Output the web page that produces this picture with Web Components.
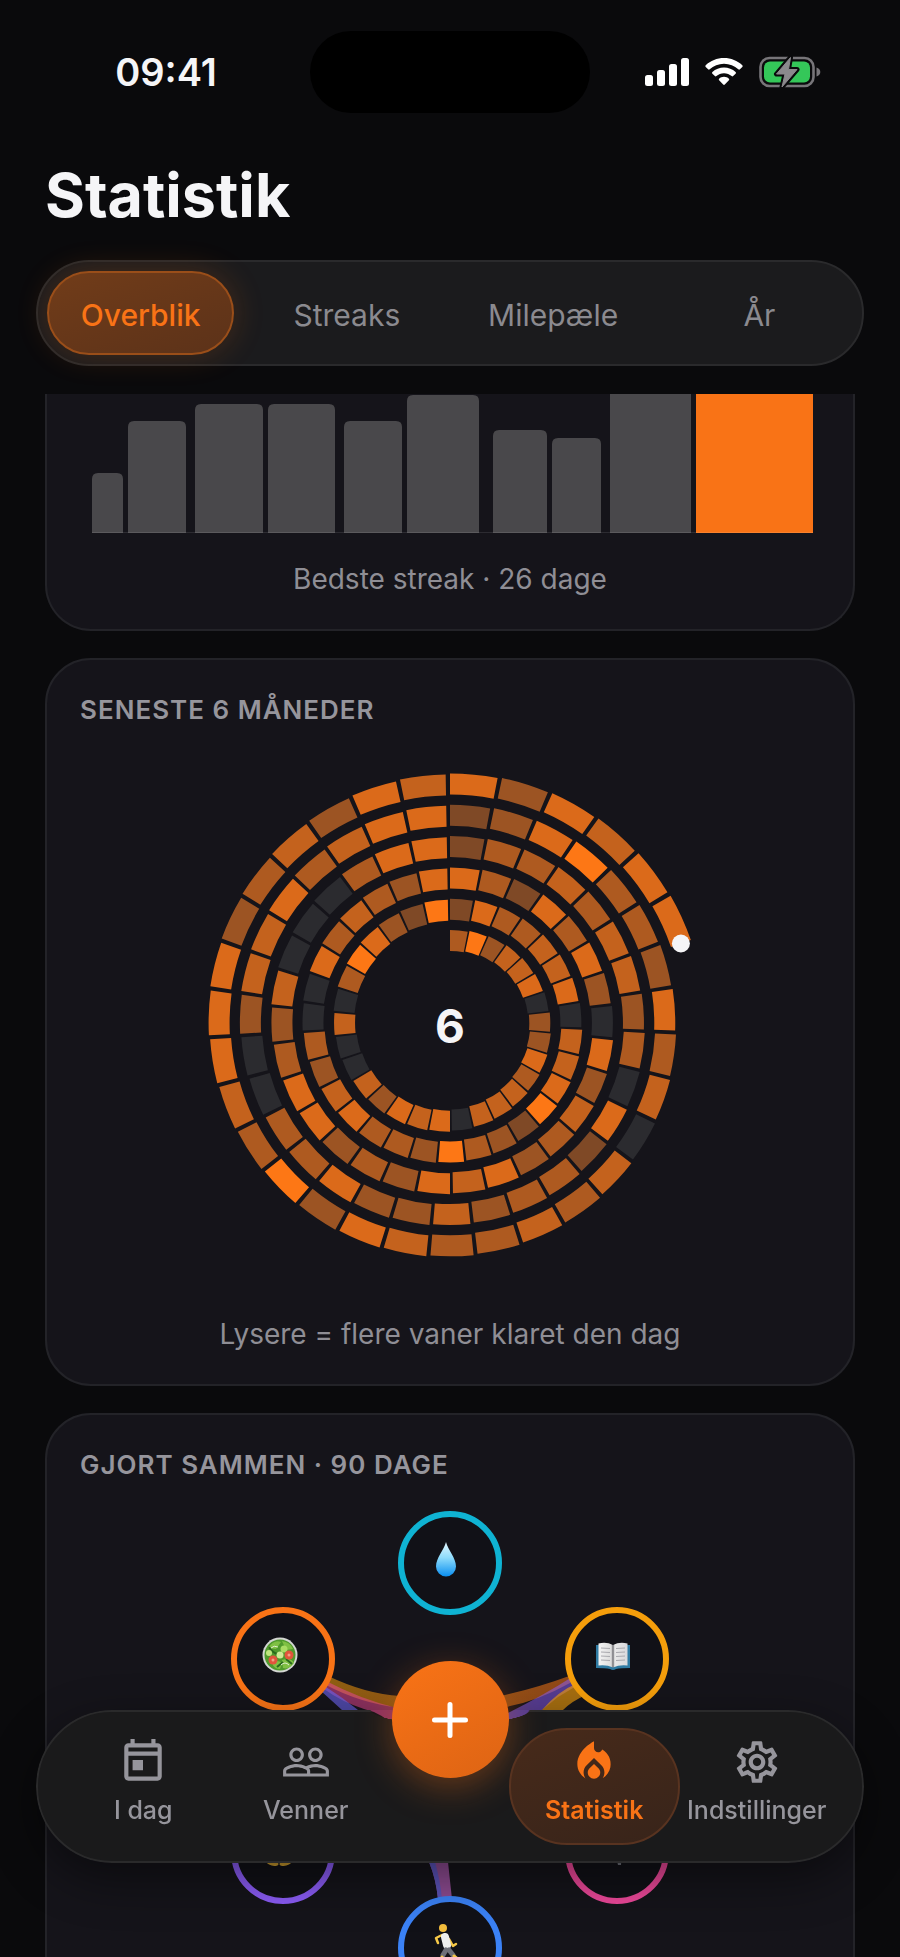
<!DOCTYPE html>
<html lang="da">
<head>
<meta charset="utf-8">
<meta name="viewport" content="width=device-width, initial-scale=1">
<title>Statistik</title>
<style>
    html, body {
        margin: 0;
        height: 100%;
        overflow: hidden;
    }

    body {
        --accent: #f97316;
        --muted: #96959c;
        background: #0a0a0c;
        color: #f5f5f7;
        font-family: Inter, "Noto Sans", sans-serif;
    }
</style>
</head>
<body>

<stats-page>
    <status-bar slot="status" time="09:41"></status-bar>
    <h1 slot="title">Statistik</h1>
    <segment-tabs slot="tabs">
        <segment-tab active>Overblik</segment-tab>
        <segment-tab>Streaks</segment-tab>
        <segment-tab>Milepæle</segment-tab>
        <segment-tab>År</segment-tab>
    </segment-tabs>

    <stat-card scrolled>
        <streak-bars></streak-bars>
        <span slot="caption">Bedste streak · 26 dage</span>
    </stat-card>
    <stat-card>
        <span slot="label">SENESTE 6 MÅNEDER</span>
        <day-spiral months="6"></day-spiral>
        <span slot="caption">Lysere = flere vaner klaret den dag</span>
    </stat-card>
    <stat-card>
        <span slot="label">GJORT SAMMEN · 90 DAGE</span>
        <habit-web></habit-web>
    </stat-card>

    <tab-bar slot="nav">
        <tab-item icon="today" href="#idag">I dag</tab-item>
        <tab-item icon="people" href="#venner">Venner</tab-item>
        <add-button slot="action"></add-button>
        <tab-item slot="end" icon="fire" href="#statistik" active>Statistik</tab-item>
        <tab-item slot="end" icon="settings" href="#indstillinger">Indstillinger</tab-item>
    </tab-bar>
</stats-page>

<script>
(function() {

    function define(name, html, setup) {
        const template = document.createElement('template')
        template.innerHTML = html

        window.customElements.define(name, class extends HTMLElement {
            constructor() {
                super()
                this.attachShadow({mode: 'open'})
                this.shadowRoot.appendChild(template.content.cloneNode(true))
            }

            connectedCallback() {
                if (setup) setup(this, this.shadowRoot)
            }
        })
    }

    define('stats-page', `
        <style>
            :host {
                display: flex;
                flex-direction: column;
                height: 100vh;
            }

            ::slotted(h1) {
                margin: 42px 45px 25px;
                font-size: 61px;
                font-weight: 700;
                line-height: 80px;
            }

            main {
                flex: 1;
                min-height: 0;
                overflow: hidden;
                display: flex;
                flex-direction: column;
                gap: 27px;
                margin-top: 28px;
                padding: 0 45px;
            }
        </style>
        <slot name="status"></slot>
        <slot name="title"></slot>
        <slot name="tabs"></slot>
        <main><slot></slot></main>
        <slot name="nav"></slot>
    `)

    define('status-bar', `
        <style>
            :host {
                display: grid;
                grid-template-columns: 1fr 280px 1fr;
                align-items: center;
                padding-top: 31px;
            }

            time {
                justify-self: center;
                margin-right: -22px;
                font-size: 38px;
                font-weight: 600;
                line-height: 48px;
            }

            .island {
                height: 82px;
                border-radius: 41px;
                background: #000;
            }

            .icons {
                display: flex;
                justify-content: center;
                align-items: center;
                gap: 16px;
                margin-right: 24px;
            }

            svg { display: block; }
        </style>
        <time></time>
        <div class="island"></div>
        <div class="icons">
            <svg width="44" height="30" viewBox="0 0 44 30" fill="#fff">
                <rect x="0" y="18" width="8" height="11" rx="2.5"/>
                <rect x="12" y="13" width="8" height="16" rx="2.5"/>
                <rect x="24" y="7" width="8" height="22" rx="2.5"/>
                <rect x="36" y="1" width="8" height="28" rx="2.5"/>
            </svg>
            <svg width="38" height="30" viewBox="0 0 38 30" fill="#fff">
                <path d="M19 1c7 0 13.500 2.700 18.300 7.200.5.5.5 1.200 0 1.700l-2.400 2.400c-.5.5-1.100.5-1.600 0C29.500 8.800 24.500 6.700 19 6.700S8.500 8.800 4.700 12.300c-.5.500-1.100.5-1.600 0L.7 9.900c-.5-.5-.5-1.200 0-1.700C5.500 3.700 12 1 19 1z"/>
                <path d="M19 10.500c4.400 0 8.500 1.700 11.600 4.500.5.500.5 1.200 0 1.700l-2.500 2.400c-.4.400-1 .4-1.500 0-2-1.800-4.700-2.900-7.600-2.900s-5.600 1.100-7.600 2.900c-.5.400-1.100.4-1.500 0l-2.500-2.400c-.5-.5-.5-1.200 0-1.700 3.100-2.800 7.200-4.500 11.600-4.500z"/>
                <path d="M19 19.800c1.900 0 3.600.7 4.900 1.900.5.500.5 1.100 0 1.600l-4.100 4.200c-.5.500-1.100.5-1.600 0l-4.100-4.200c-.5-.5-.5-1.100 0-1.600 1.300-1.200 3-1.900 4.900-1.900z"/>
            </svg>
            <svg width="62" height="32" viewBox="0 0 62 32">
                <rect x="1.500" y="2" width="53" height="28" rx="9" fill="none" stroke="#777579" stroke-width="2.600"/>
                <path d="M57.500 11.500c2.400.8 3.800 2.500 3.800 4.500s-1.400 3.700-3.800 4.500z" fill="#777579"/>
                <rect x="5" y="5.500" width="46" height="21" rx="6" fill="#34c759"/>
                <path d="M31.500 1.500L17.500 18h8.500l-3 13L38 13.500h-8.500z" fill="#8b898d" stroke="#0a0a0c" stroke-width="5" stroke-linejoin="round"/>
                <path d="M31.500 1.500L17.500 18h8.500l-3 13L38 13.500h-8.500z" fill="#8b898d" stroke="#8b898d" stroke-linejoin="round"/>
            </svg>
        </div>
    `, (el, root) => {
        root.querySelector('time').textContent = el.getAttribute('time')
    })

    define('segment-tabs', `
        <style>
            :host {
                display: grid;
                grid-auto-flow: column;
                grid-auto-columns: 1fr;
                gap: 19px;
                box-sizing: border-box;
                height: 106px;
                margin: 0 36px;
                padding: 9px;
                border: 2px solid #2a2a2c;
                border-radius: 53px;
                background: #1b1b1d;
            }
        </style>
        <slot></slot>
    `, el => el.setAttribute('role', 'tablist'))

    define('segment-tab', `
        <style>
            :host { display: grid; }

            button {
                padding: 4px 0 0;
                border: 2px solid transparent;
                border-radius: 42px;
                background: none;
                color: #8b8a8f;
                font: 400 30px/36px Inter, sans-serif;
            }

            :host([active]) button {
                border-color: #9a4e19;
                background: linear-gradient(160deg, #713c19, #5c3219);
                color: var(--accent);
                font-weight: 500;
                box-shadow: 0 0 32px rgba(249, 115, 22, .2);
            }
        </style>
        <button type="button" role="tab"><slot></slot></button>
    `, (el, root) => {
        root.querySelector('button').setAttribute('aria-selected', el.hasAttribute('active'))
    })

    define('stat-card', `
        <style>
            :host {
                display: flex;
                flex-direction: column;
                flex-shrink: 0;
                padding: 33px 33px 32px;
                border: 2px solid #232328;
                border-radius: 46px;
                background: #15141a;
            }

            /* top of the card has scrolled under the header */
            :host([scrolled]) {
                padding-top: 0;
                border-top: 0;
                border-radius: 0 0 46px 46px;
            }

            ::slotted([slot="label"]) {
                color: var(--muted);
                font-size: 26px;
                font-weight: 600;
                line-height: 34px;
                letter-spacing: 1px;
            }

            ::slotted([slot="caption"]) {
                color: #8f8e95;
                font-size: 28px;
                line-height: 36px;
                text-align: center;
            }
        </style>
        <slot name="label"></slot>
        <slot></slot>
        <slot name="caption"></slot>
    `)

    define('streak-bars', `
        <style>
            :host {
                display: block;
                margin-bottom: 28px;
            }

            svg {
                display: block;
                width: 100%;
            }
        </style>
        <svg viewBox="0 0 740 139" role="img" aria-label="Streaks"></svg>
    `, (el, root) => {
        // x, width, height of each streak; the last one is the record
        const bars = [
            [12, 31, 60], [48, 58, 112], [115, 68, 129], [188, 67, 129], [264, 58, 112],
            [327, 72, 138], [413, 54, 103], [472, 49, 95], [530, 81, 155], [616, 117, 224]
        ]
        root.querySelector('svg').innerHTML = bars.map(([x, w, h], i) =>
            `<path d="M${x} 139V${139 - h + 6}q0 -6 6 -6h${w - 12}q6 0 6 6V139z" fill="${i === bars.length - 1 ? '#f97316' : '#49484b'}"/>`
        ).join('') + '<path d="M12 138.500H733" stroke="#fff" stroke-opacity=".1"/>'
    })

    define('day-spiral', `
        <style>
            :host {
                display: block;
                margin: 23px 0 20px;
            }

            svg {
                display: block;
                width: 100%;
            }

            text {
                fill: #f5f5f7;
                font: 700 46px Inter, sans-serif;
                text-anchor: middle;
            }
        </style>
        <svg viewBox="-370 -273 740 546" role="img"><g></g><text x="0" y="20"></text></svg>
    `, (el, root) => {
        const shades = ['#2b2b2f', '#7f4926', '#9c5423', '#ae5a20', '#c4621d', '#db6a1a', '#fd7715']
        // one string per month, one digit per day
        const months = [
            '362445022534440545240040365216',
            '1533445044561236233542300534325',
            '531535205243254523255324000355',
            '1334344230513324225330024453455',
            '1256332534043433452634555234254',
            '525455'
        ]
        const lengths = [30, 31, 30, 31, 31, 30]
        const start = 82.5, pitch = 31.3, half = 10.5
        const at = (r, deg) => {
            const a = deg * Math.PI / 180
            return (r * Math.sin(a)).toFixed(2) + ' ' + (-r * Math.cos(a)).toFixed(2)
        }

        let out = '', tip
        months.forEach((days, m) => {
            const step = 360 / lengths[m]
            days.split('').forEach((level, d) => {
                const r = start + pitch * (m + d / lengths[m])
                const a = d * step, b = a + step - 1
                const o = r + half, i = r - half
                out += `<path d="M${at(o, a)}A${o} ${o} 0 0 1 ${at(o, b)}L${at(i, b)}A${i} ${i} 0 0 0 ${at(i, a)}z" fill="${shades[level]}"/>`
                tip = at(r, b).split(' ')
            })
        })
        out += `<circle cx="${tip[0]}" cy="${tip[1]}" r="9" fill="#f5f5f7"/>`
        root.querySelector('g').innerHTML = out
        root.querySelector('text').textContent = el.getAttribute('months')
    })

    define('habit-web', `
        <style>
            :host { display: block; }

            svg {
                display: block;
                width: 100%;
            }
        </style>
        <svg viewBox="-370 -273 740 546" role="img" aria-label="Vaner gjort sammen">
            <defs>
                <linearGradient id="drop" x1="0" y1="0" x2="0" y2="1">
                    <stop offset="0" stop-color="#e4f7ff"/>
                    <stop offset=".45" stop-color="#8fdcfb"/>
                    <stop offset="1" stop-color="#0a8ff0"/>
                </linearGradient>
                <linearGradient id="page" x1="0" y1="0" x2="1" y2="0">
                    <stop offset="0" stop-color="#f4f4f4"/>
                    <stop offset=".44" stop-color="#dcdcdc"/>
                    <stop offset=".5" stop-color="#6f6f74"/>
                    <stop offset=".56" stop-color="#e8e8e8"/>
                    <stop offset="1" stop-color="#d9d9dc"/>
                </linearGradient>
                <linearGradient id="span" x1="0" y1="0" x2="1" y2="0">
                    <stop offset="0" stop-color="#f59e0b"/>
                    <stop offset="1" stop-color="#f97316"/>
                </linearGradient>
            </defs>

            <!-- ribbons between habits -->
            <g>
                <path d="M-122 -79Q-84 -61 -50 -59Q0 -55 50 -59Q84 -66 122 -80L120 -72Q84 -52 50 -47Q0 -43 -50 -47Q-90 -52 -124 -70z" fill="url(#span)" fill-opacity=".55"/>
                <path d="M-124 -74Q-90 -56 -53 -47L-40 -28H-55Q-68 -42 -86 -46Q-108 -53 -126 -66z" fill="#ec4899" fill-opacity=".55"/>
                <path d="M-124 -68Q-108 -58 -92 -45Q-40 20 -12 108H-24Q-60 20 -108 -45L-129 -64z" fill="#6c63ee" fill-opacity=".65"/>
                <path d="M122 -78Q94 -60 56 -41L46 -26H58Q74 -43 92 -45L108 -58L128 -70z" fill="#8b5cf6" fill-opacity=".55"/>
                <path d="M128 -72Q108 -64 92 -45L84 -36H104L113 -45Q122 -54 136 -60z" fill="#f59e0b" fill-opacity=".65"/>
                <path d="M-21 107Q-14 124 -12 144H2Q0 126 -2 107z" fill="#c063c4" fill-opacity=".7"/>
                <path d="M-21 107Q-14 124 -12 144H-8Q-10 124 -15 107z" fill="#5b53b8"/>
            </g>

            <g fill="#111117" stroke-width="6">
                <circle cx="0" cy="-192" r="49" stroke="#0fb3d3"/>
                <circle cx="167" cy="-96" r="49" stroke="#f59e0b"/>
                <circle cx="167" cy="97" r="49" stroke="#ec4899"/>
                <circle cx="0" cy="193" r="49" stroke="#3b82f6"/>
                <circle cx="-167" cy="97" r="49" stroke="#8b5cf6"/>
                <circle cx="-167" cy="-96" r="49" stroke="#f97316"/>
            </g>

            <!-- water -->
            <path d="M-4 -213c2 8 10 16 10 24.500a10 10 0 0 1 -20 0c0 -8.500 8 -16.500 10 -24.500z" fill="url(#drop)"/>

            <!-- salad -->
            <g transform="translate(-170 -100)">
                <circle r="17.500" fill="#d3d6d2"/>
                <circle r="15.500" fill="#4f9a2c"/>
                <path d="M-12 -7q6 -9 13 -6l-5 7zM2 5q9 -3 12 3q-5 7 -11 5zM-8 8q5 -4 10 0l-2 6q-6 0 -8 -6zM2 -14q8 1 11 8l-7 1z" fill="#7fc043"/>
                <path d="M-3 -1q-5 -2 -8 -7M6 4l6 5M-3 12l6 -5" stroke="#2b6a1c" stroke-width="2" fill="none"/>
                <circle cx="4" cy="-6" r="3.500" fill="#a9dc63"/>
                <circle cx="0" cy="0" r="3.500" fill="#cdeb94"/>
                <circle cx="-11" cy="-2" r="3" fill="#bfe67e"/>
                <circle cx="-7" cy="5" r="4.500" fill="#e2553c"/>
                <circle cx="9" cy="0" r="4.500" fill="#e2553c"/>
                <circle cx="-7" cy="5" r="1.500" fill="#f2a083"/>
                <circle cx="9" cy="0" r="1.500" fill="#f2a083"/>
                <path d="M1 10q4 -4 8 0M-9 -7q3 -3 7 -1" stroke="#e3efcf" fill="none"/>
            </g>

            <!-- book -->
            <g transform="translate(163 -99)">
                <path d="M-17 -11h34v23q-9 0 -14 1q-3 2 -6 0q-5 -1 -14 -1z" fill="#2f7ba3"/>
                <path d="M-14.500 -12.500q8 -2 14.500 1.500q6.500 -3.500 14.500 -1.500v22q-8 -1 -14.500 2q-6.500 -3 -14.500 -2z" fill="url(#page)"/>
                <path d="M-12 -8l9 .5M-12 -4l9 .5M-12 0l9 .5M-12 4l9 .5M3 -7.500l9 -.5M3 -3.500l9 -.5M3 .5l9 -.5M3 4.500l9 -.5" stroke="#a9a9ae" stroke-width="1"/>
            </g>

            <!-- meditation and dumbbell, mostly under the tab bar -->
            <path d="M-185 104q6 7 12 5M-157 104q-6 7 -12 5" fill="none" stroke="#c99a2e" stroke-width="3" stroke-linecap="round"/>
            <path d="M164 92h8l-1 18h-3z" fill="#6d6f78"/>

            <!-- runner -->
            <g transform="translate(-4 191)" fill="none" stroke-linecap="round" stroke-linejoin="round">
                <circle cx="-3" cy="-18" r="4" fill="#f4bd3c"/>
                <path d="M-4 -11l-6 3l2 5M3 -7l4 7l3 -2" stroke="#f7c948" stroke-width="2.500"/>
                <path d="M-1 -9l2 8" stroke="#eeeeee" stroke-width="8"/>
                <path d="M0 4l-3 5M3 4l4 5" stroke="#6d6f78" stroke-width="5"/>
                <path d="M-4 11l-6 10M8 10l5 4l-1 2" stroke="#f7c948" stroke-width="3"/>
                <path d="M11 17l4 0" stroke="#eeeeee" stroke-width="3"/>
            </g>
        </svg>
    `)

    define('tab-bar', `
        <style>
            :host {
                position: fixed;
                left: 36px;
                right: 36px;
                bottom: 94px;
                display: grid;
                grid-template-columns: 1fr 1fr 126px 1fr 1fr;
                align-items: center;
                box-sizing: border-box;
                height: 153px;
                padding: 0 26px;
                border-radius: 76px;
                box-shadow: 0 16px 48px rgba(0, 0, 0, .45);
            }

            /* surface, with a shallow notch around the add button */
            :host::before {
                content: "";
                position: absolute;
                inset: 0;
                z-index: -1;
                border: 2px solid #2a2a2b;
                border-radius: 76px;
                background: #1a1a1b;
                -webkit-mask: radial-gradient(ellipse 80px 14px at 50% 0, transparent 98%, #000);
                mask: radial-gradient(ellipse 80px 14px at 50% 0, transparent 98%, #000);
            }
        </style>
        <slot></slot>
        <slot name="action"></slot>
        <slot name="end"></slot>
    `, el => el.setAttribute('role', 'navigation'))

    const icons = {
        today: 'M19 3h-1V1h-2v2H8V1H6v2H5c-1.110 0-1.990.9-1.990 2L3 19c0 1.100.890 2 2 2h14c1.100 0 2-.9 2-2V5c0-1.100-.9-2-2-2zm0 16H5V9h14v10zm0-12H5V5h14v2zM7 11h5v5H7z',
        people: 'M16.500 13c-1.200 0-3.070.34-4.500 1-1.430-.67-3.300-1-4.500-1C5.330 13 1 14.080 1 16.250V19h22v-2.750c0-2.170-4.330-3.250-6.500-3.250zm-4 4.500h-10v-1.250c0-.54 2.560-1.750 5-1.750s5 1.210 5 1.750v1.250zm9 0H14v-1.250c0-.46-.2-.86-.52-1.220.88-.3 1.960-.53 3.020-.53 2.440 0 5 1.210 5 1.750v1.250zM7.500 12c1.930 0 3.500-1.570 3.500-3.500S9.430 5 7.500 5 4 6.570 4 8.500 5.570 12 7.500 12zm0-5.500c1.100 0 2 .9 2 2s-.9 2-2 2-2-.9-2-2 .9-2 2-2zm9 5.500c1.930 0 3.500-1.570 3.500-3.500S18.430 5 16.500 5 13 6.570 13 8.500s1.570 3.500 3.500 3.500zm0-5.500c1.100 0 2 .9 2 2s-.9 2-2 2-2-.9-2-2 .9-2 2-2z',
        fire: 'M12 12.900l-2.130 2.090C9.310 15.550 9 16.280 9 17.060 9 18.680 10.350 20 12 20s3-1.320 3-2.940c0-.78-.31-1.520-.87-2.070L12 12.900zM16 6l-.44.55C14.380 8.020 12 7.190 12 5.300V2S4 6 4 13c0 2.920 1.560 5.470 3.890 6.860-.56-.79-.89-1.760-.89-2.800 0-1.320.52-2.560 1.470-3.500L12 10.100l3.530 3.470c.95.93 1.470 2.170 1.470 3.500 0 1.020-.31 1.960-.85 2.750 1.890-1.150 3.290-3.060 3.710-5.300.66-3.550-1.070-6.900-3.860-8.520z',
        settings: 'M19.430 12.980c.04-.32.07-.64.07-.98 0-.34-.03-.66-.07-.98l2.110-1.650c.19-.15.24-.42.12-.64l-2-3.460c-.09-.16-.26-.25-.44-.25-.06 0-.12.01-.17.03l-2.490 1c-.52-.4-1.080-.73-1.690-.98l-.38-2.650C14.460 2.180 14.250 2 14 2h-4c-.25 0-.46.18-.49.42l-.38 2.650c-.61.25-1.170.59-1.690.98l-2.490-1c-.06-.02-.12-.03-.18-.03-.17 0-.34.09-.43.25l-2 3.460c-.13.22-.07.49.12.64l2.110 1.650c-.04.32-.07.65-.07.98 0 .33.03.66.07.98l-2.110 1.650c-.19.15-.24.42-.12.64l2 3.460c.09.16.26.25.44.25.06 0 .12-.01.17-.03l2.490-1c.52.4 1.080.73 1.690.98l.38 2.650c.03.24.24.42.49.42h4c.25 0 .46-.18.49-.42l.38-2.650c.61-.25 1.170-.59 1.690-.98l2.490 1c.06.02.12.03.18.03.17 0 .34-.09.43-.25l2-3.460c.12-.22.07-.49-.12-.64l-2.110-1.650zm-1.980-1.710c.04.31.05.52.05.73 0 .21-.02.43-.05.73l-.14 1.130.89.7 1.080.84-.7 1.210-1.270-.51-1.040-.42-.9.68c-.43.32-.84.56-1.250.73l-1.060.43-.16 1.130-.2 1.350h-1.400l-.19-1.350-.16-1.130-1.060-.43c-.43-.18-.83-.41-1.230-.71l-.91-.7-1.060.43-1.270.51-.7-1.210 1.080-.84.89-.7-.14-1.130c-.03-.31-.05-.54-.05-.74s.02-.43.05-.73l.14-1.130-.89-.7-1.080-.84.7-1.210 1.270.51 1.040.42.9-.68c.43-.32.84-.56 1.250-.73l1.060-.43.16-1.130.2-1.350h1.390l.19 1.350.16 1.130 1.060.43c.43.18.83.41 1.230.71l.91.7 1.060-.43 1.270-.51.7 1.210-1.070.85-.89.7.14 1.130zM12 8c-2.210 0-4 1.790-4 4s1.790 4 4 4 4-1.790 4-4-1.790-4-4-4zm0 6c-1.100 0-2-.9-2-2s.9-2 2-2 2 .9 2 2-.9 2-2 2z'
    }

    define('tab-item', `
        <style>
            :host {
                display: block;
                margin: 0 -4px;
            }

            a {
                display: flex;
                flex-direction: column;
                align-items: center;
                gap: 7px;
                box-sizing: border-box;
                height: 117px;
                padding-top: 7px;
                border: 2px solid transparent;
                border-radius: 58px;
                color: var(--muted);
                font-size: 25px;
                font-weight: 500;
                line-height: 32px;
                text-decoration: none;
                white-space: nowrap;
            }

            :host([active]) a {
                border-color: #583320;
                background: linear-gradient(160deg, #472a1a, #38241a);
                color: var(--accent);
                font-weight: 600;
            }

            svg {
                display: block;
                width: 50px;
                height: 50px;
                fill: currentColor;
            }
        </style>
        <a><svg viewBox="0 0 24 24" aria-hidden="true"><path/></svg><span><slot></slot></span></a>
    `, (el, root) => {
        root.querySelector('a').setAttribute('href', el.getAttribute('href'))
        root.querySelector('path').setAttribute('d', icons[el.getAttribute('icon')])
        if (el.hasAttribute('active')) root.querySelector('a').setAttribute('aria-current', 'page')
    })

    define('add-button', `
        <style>
            :host {
                justify-self: center;
                align-self: start;
                margin-top: -49px;
            }

            button {
                display: grid;
                place-items: center;
                width: 117px;
                height: 117px;
                padding: 0;
                border: 0;
                border-radius: 50%;
                background: linear-gradient(150deg, #f97316, #dd6414);
                box-shadow: 0 9px 36px rgba(249, 115, 22, .35);
            }
        </style>
        <button type="button" aria-label="Tilføj">
            <svg width="40" height="40" viewBox="0 0 40 40" stroke="#fff" stroke-width="5" stroke-linecap="round"><path d="M20 4.500v31M4.500 20h31"/></svg>
        </button>
    `)
}())
</script>
</body>
</html>
